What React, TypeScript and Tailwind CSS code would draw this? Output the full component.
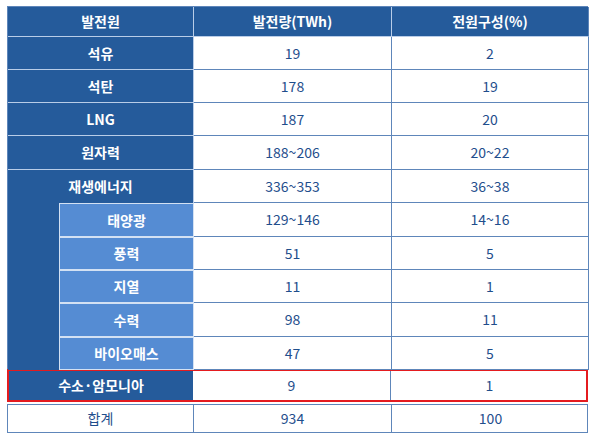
import React from "react";

const font = { fontFamily: '"Noto Sans CJK KR", "Noto Sans", sans-serif' };

const mainRows = [
  { name: "석유", gen: "19", share: "2", h: "h-[33px]" },
  { name: "석탄", gen: "178", share: "19", h: "h-[33px]" },
  { name: "LNG", gen: "187", share: "20", h: "h-[33px]" },
  { name: "원자력", gen: "188~206", share: "20~22", h: "h-[34px]" },
];

const renewables = [
  { name: "태양광", gen: "129~146", share: "14~16", h: "h-[34px]" },
  { name: "풍력", gen: "51", share: "5", h: "h-[33px]" },
  { name: "지열", gen: "11", share: "1", h: "h-[33px]" },
  { name: "수력", gen: "98", share: "11", h: "h-[34px]" },
  { name: "바이오매스", gen: "47", share: "5", h: "h-[33px]" },
];

const dark = "bg-[#255b9b] text-white font-bold border-b border-r border-[#b9cde8] flex items-center justify-center";
const light = "bg-[#558cd3] text-white font-bold border border-[#d3e1f3] flex items-center justify-center";
const body = "bg-white text-[#1f4e8c] border-b border-r border-[#5e86ba] flex items-center justify-center";

export default function App() {
  return (
    <div className="w-[600px] h-[441px] bg-white pt-[6px] pl-[7px] text-[14px]" style={font}>
      <div className="w-[581px]">
        {/* main grid */}
        <div className="grid grid-cols-[51px_135px_198px_197px] border-l border-t border-[#5e86ba]">
          <div className={`${dark} col-span-2 h-[30px]`}>발전원</div>
          <div className={`${dark} h-[30px]`}>발전량(TWh)</div>
          <div className={`${dark} h-[30px] border-r-[#5e86ba]`}>전원구성(%)</div>

          {mainRows.map((r) => (
            <React.Fragment key={r.name}>
              <div className={`${dark} col-span-2 ${r.h}`}>{r.name}</div>
              <div className={`${body} ${r.h}`}>{r.gen}</div>
              <div className={`${body} ${r.h}`}>{r.share}</div>
            </React.Fragment>
          ))}

          <div className={`${dark} col-span-2 h-[33px] border-b-0`}>재생에너지</div>
          <div className={`${body} h-[33px]`}>336~353</div>
          <div className={`${body} h-[33px]`}>36~38</div>

          <div className="row-span-5 bg-[#255b9b]" />
          {renewables.map((r) => (
            <React.Fragment key={r.name}>
              <div className={`${light} ${r.h}`}>{r.name}</div>
              <div className={`${body} ${r.h}`}>{r.gen}</div>
              <div className={`${body} ${r.h}`}>{r.share}</div>
            </React.Fragment>
          ))}
        </div>

        {/* highlighted row */}
        <div className="grid grid-cols-[184px_198px_197px] h-[33px] border-2 border-[#e41b1f] -mt-px">
          <div className="bg-[#255b9b] text-white font-bold flex items-center justify-center">수소·암모니아</div>
          <div className="text-[#1f4e8c] border-r border-[#5e86ba] flex items-center justify-center">9</div>
          <div className="text-[#1f4e8c] flex items-center justify-center">1</div>
        </div>

        {/* total */}
        <div className="grid grid-cols-[186px_198px_197px] h-[29px] mt-[2px] border border-[#5e86ba] text-[#1f4e8c]">
          <div className="border-r border-[#5e86ba] flex items-center justify-center">합계</div>
          <div className="border-r border-[#5e86ba] flex items-center justify-center">934</div>
          <div className="flex items-center justify-center">100</div>
        </div>
      </div>
    </div>
  );
}
